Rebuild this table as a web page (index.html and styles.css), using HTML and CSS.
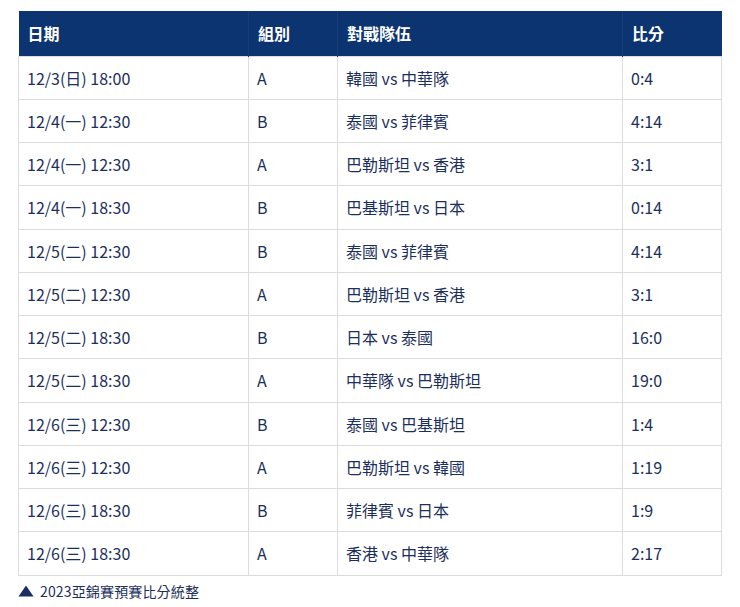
FILE: index.html
```html
<!DOCTYPE html>
<html lang="zh-Hant">
<head>
<meta charset="utf-8">
<link rel="stylesheet" href="styles.css">
</head>
<body>
<div class="wrap">
<table class="scores">
  <colgroup>
    <col class="c-date"><col class="c-group"><col class="c-match"><col class="c-score">
  </colgroup>
  <thead>
    <tr><th>日期</th><th>組別</th><th>對戰隊伍</th><th>比分</th></tr>
  </thead>
  <tbody>
    <tr><td>12/3(日) 18:00</td><td>A</td><td>韓國 vs 中華隊</td><td>0:4</td></tr>
    <tr><td>12/4(一) 12:30</td><td>B</td><td>泰國 vs 菲律賓</td><td>4:14</td></tr>
    <tr><td>12/4(一) 12:30</td><td>A</td><td>巴勒斯坦 vs 香港</td><td>3:1</td></tr>
    <tr><td>12/4(一) 18:30</td><td>B</td><td>巴基斯坦 vs 日本</td><td>0:14</td></tr>
    <tr><td>12/5(二) 12:30</td><td>B</td><td>泰國 vs 菲律賓</td><td>4:14</td></tr>
    <tr><td>12/5(二) 12:30</td><td>A</td><td>巴勒斯坦 vs 香港</td><td>3:1</td></tr>
    <tr><td>12/5(二) 18:30</td><td>B</td><td>日本 vs 泰國</td><td>16:0</td></tr>
    <tr><td>12/5(二) 18:30</td><td>A</td><td>中華隊 vs 巴勒斯坦</td><td>19:0</td></tr>
    <tr><td>12/6(三) 12:30</td><td>B</td><td>泰國 vs 巴基斯坦</td><td>1:4</td></tr>
    <tr><td>12/6(三) 12:30</td><td>A</td><td>巴勒斯坦 vs 韓國</td><td>1:19</td></tr>
    <tr><td>12/6(三) 18:30</td><td>B</td><td>菲律賓 vs 日本</td><td>1:9</td></tr>
    <tr><td>12/6(三) 18:30</td><td>A</td><td>香港 vs 中華隊</td><td>2:17</td></tr>
  </tbody>
</table>
<p class="caption"><svg class="tri" width="16" height="12" viewBox="0 0 16 12" aria-hidden="true"><polygon points="8,0.5 15.5,11.5 0.5,11.5" fill="#1b2f5c"/></svg><span>2023亞錦賽預賽比分統整</span></p>
</div>
</body>
</html>
```
FILE: styles.css
```css
html, body {
  margin: 0;
  padding: 0;
  background: #fff;
}
body {
  font-family: "Noto Sans CJK TC", "Noto Sans", sans-serif;
  color: #1b2f5c;
}
.wrap {
  padding: 11px 0 0 18px;
}
.scores {
  border-collapse: collapse;
  width: 703px;
  table-layout: fixed;
}
.c-date { width: 230px; }
.c-group { width: 89px; }
.c-match { width: 285px; }
.c-score { width: 99px; }
.scores th {
  background: #0c3470;
  color: #fff;
  font-size: 16px;
  font-weight: 700;
  text-align: left;
  height: 45px;
  padding: 0 8px 0 9px;
  border: 0;
  box-sizing: border-box;
}
.scores td {
  height: 43.25px;
  padding: 0 8px;
  font-size: 16px;
  border: 1px solid #dcdcdc;
  box-sizing: border-box;
  line-height: 1;
}
.scores thead th + th {
  border-left: 1px solid #183d78;
}
.caption {
  display: flex;
  align-items: center;
  gap: 6px;
  margin: 5px 0 0;
  font-size: 14px;
  line-height: 20px;
  letter-spacing: 0.15px;
  color: #1b2f5c;
}
.tri {
  display: block;
  flex: none;
}
```
